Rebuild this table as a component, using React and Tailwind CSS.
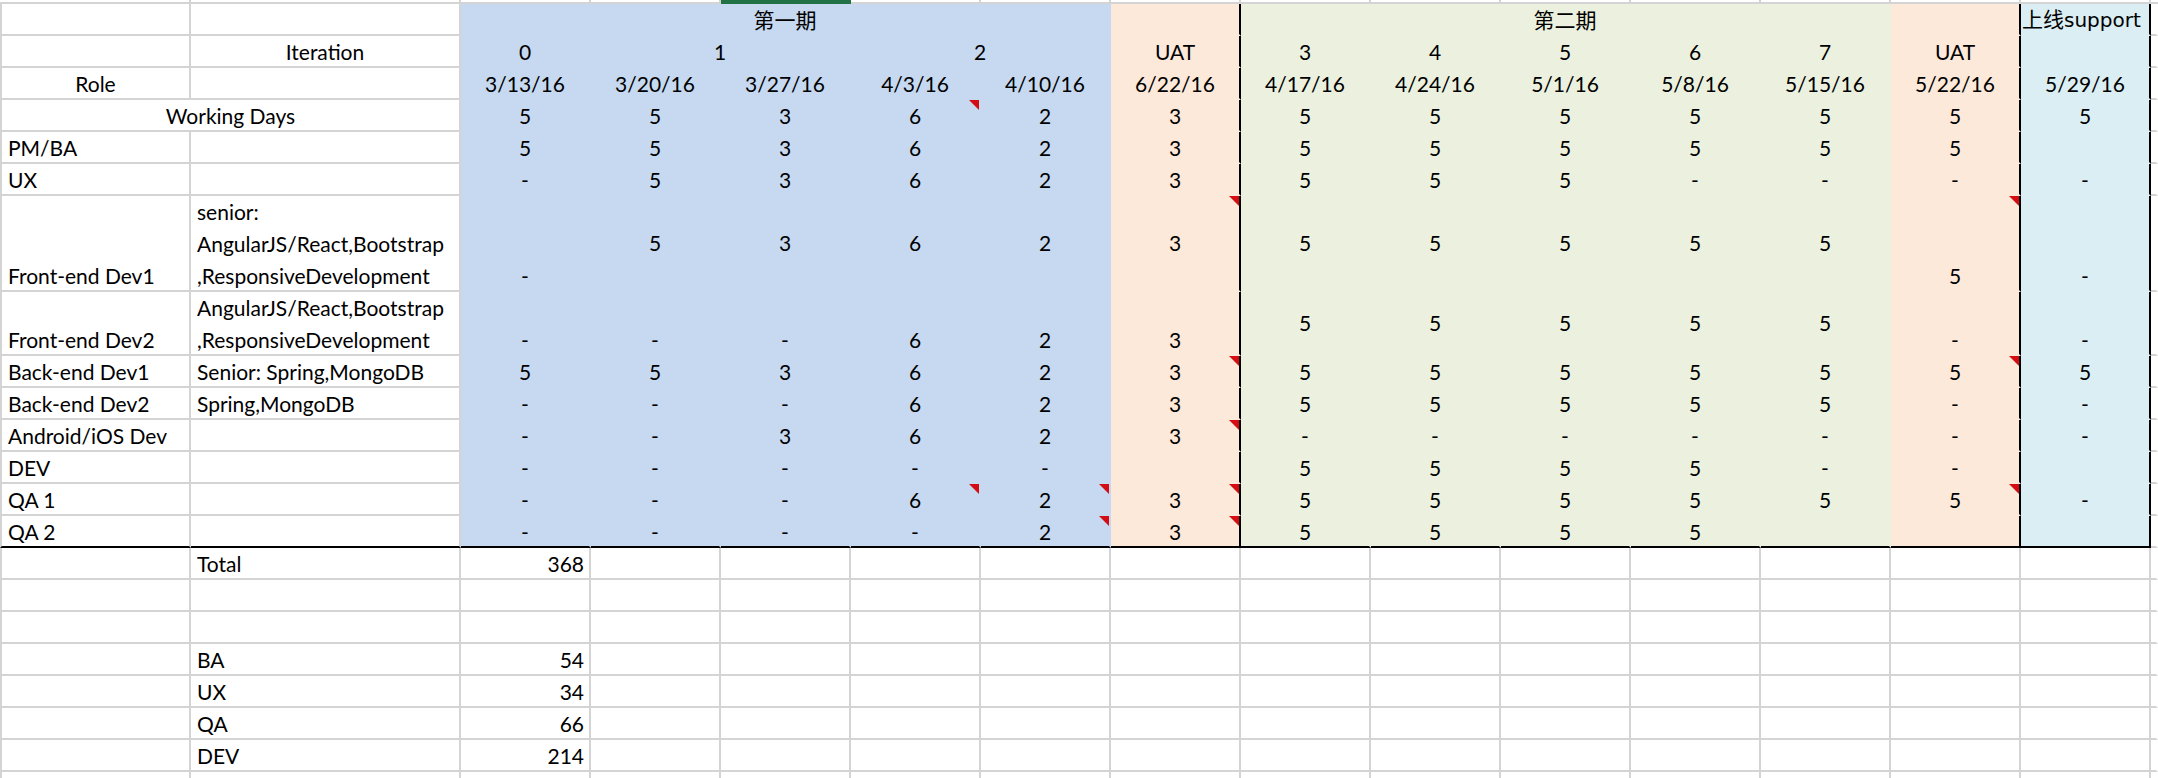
import React from 'react';
import clsx from 'clsx';

const BLUE = 'bg-[#c6d9f1]';
const PEACH = 'bg-[#fde9d9]';
const GREEN = 'bg-[#ebf1de]';
const AQUA = 'bg-[#daeef3]';

const fills = [BLUE, BLUE, BLUE, BLUE, BLUE, PEACH, GREEN, GREEN, GREEN, GREEN, GREEN, PEACH, AQUA];
const thickRight = [5, 11, 12];

const dates = ['3/13/16', '3/20/16', '3/27/16', '4/3/16', '4/10/16', '6/22/16', '4/17/16', '4/24/16', '5/1/16', '5/8/16', '5/15/16', '5/22/16', '5/29/16'];
const workingDays = ['5', '5', '3', '6', '2', '3', '5', '5', '5', '5', '5', '5', '5'];

const roles = [
  { role: 'PM/BA', vals: ['5', '5', '3', '6', '2', '3', '5', '5', '5', '5', '5', '5', ''] },
  { role: 'UX', vals: ['-', '5', '3', '6', '2', '3', '5', '5', '5', '-', '-', '-', '-'] },
  {
    role: 'Front-end Dev1',
    skills: ['senior:', 'AngularJS/React,Bootstrap', ',ResponsiveDevelopment'],
    h: 'h-[96px]',
    vals: ['-', '5', '3', '6', '2', '3', '5', '5', '5', '5', '5', '5', '-'],
    mid: [1, 2, 3, 4, 5, 6, 7, 8, 9, 10],
    notes: [5, 11],
  },
  {
    role: 'Front-end Dev2',
    skills: ['AngularJS/React,Bootstrap', ',ResponsiveDevelopment'],
    h: 'h-[64px]',
    vals: ['-', '-', '-', '6', '2', '3', '5', '5', '5', '5', '5', '-', '-'],
    mid: [6, 7, 8, 9, 10],
  },
  { role: 'Back-end Dev1', skills: ['Senior: Spring,MongoDB'], vals: ['5', '5', '3', '6', '2', '3', '5', '5', '5', '5', '5', '5', '5'], notes: [5, 11] },
  { role: 'Back-end Dev2', skills: ['Spring,MongoDB'], vals: ['-', '-', '-', '6', '2', '3', '5', '5', '5', '5', '5', '-', '-'] },
  { role: 'Android/iOS Dev', vals: ['-', '-', '3', '6', '2', '3', '-', '-', '-', '-', '-', '-', '-'], notes: [5] },
  { role: 'DEV', vals: ['-', '-', '-', '-', '-', '', '5', '5', '5', '5', '-', '-', ''] },
  { role: 'QA 1', vals: ['-', '-', '-', '6', '2', '3', '5', '5', '5', '5', '5', '5', '-'], notes: [3, 4, 5, 11] },
  { role: 'QA 2', vals: ['-', '-', '-', '-', '2', '3', '5', '5', '5', '5', '', '', ''], notes: [4, 5] },
];

const summary = [
  { label: 'Total', n: '368' },
  {},
  {},
  { label: 'BA', n: '54' },
  { label: 'UX', n: '34' },
  { label: 'QA', n: '66' },
  { label: 'DEV', n: '214' },
  {},
];

function Note() {
  return (
    <svg className="absolute top-0 right-0" width="10" height="10" viewBox="0 0 10 10">
      <polygon points="0,0 10,0 10,10" fill="#d40d12" />
    </svg>
  );
}

function Cell({ w = 'w-[130px]', fill = 'bg-white', right = 'grid', bottom = 'grid', left = false, align = 'center', mid = false, note = false, className, children }) {
  return (
    <div
      className={clsx(
        'relative flex shrink-0 border-r-2 border-b-2',
        w,
        fill,
        left && 'border-l-2 border-l-[#d4d4d4]',
        right === 'grid' && 'border-r-[#d4d4d4]',
        right === 'none' && 'border-r-transparent',
        right === 'black' && 'border-r-black',
        bottom === 'grid' && 'border-b-[#d4d4d4]',
        bottom === 'none' && 'border-b-transparent',
        bottom === 'black' && 'border-b-black',
        mid ? 'items-center' : 'items-end',
        align === 'left' && 'justify-start pl-[6px]',
        align === 'center' && 'justify-center',
        align === 'right' && 'justify-end pr-[5px]',
        className
      )}
    >
      {children != null && children !== '' && (
        <div className={clsx('leading-[32px] whitespace-nowrap', !mid && '-mb-[2px]')}>{children}</div>
      )}
      {note && <Note />}
    </div>
  );
}

const Tail = ({ bottom = 'grid' }) => <Cell w="flex-1 min-w-0" right="none" bottom={bottom} />;

function HeaderStrip() {
  const cols = Array.from({ length: 13 }, (_, i) => i);
  return (
    <div className="flex h-[4px]">
      <div className="w-[191px] shrink-0 border-r-2 border-b-2 border-[#d4d4d4]" />
      <div className="w-[270px] shrink-0 border-r-2 border-b-2 border-[#d4d4d4]" />
      {cols.map((i) => (
        <div key={i} className={clsx('w-[130px] shrink-0', i === 2 ? 'bg-[#217346]' : 'border-r-2 border-b-2 border-[#d4d4d4]')} />
      ))}
      <div className="flex-1 border-b-2 border-[#d4d4d4]" />
    </div>
  );
}

export default function App() {
  return (
    <div className="h-[778px] w-full overflow-hidden bg-white text-black text-[21px] font-[family-name:Lato,'Noto_Sans_CJK_SC',sans-serif]">
      <HeaderStrip />

      {/* phase row */}
      <div className="flex h-[32px]">
        <Cell w="w-[191px]" left />
        <Cell w="w-[270px]" />
        <Cell w="w-[650px]" fill={BLUE} right="none" bottom="none">第一期</Cell>
        <Cell fill={PEACH} right="black" bottom="none" />
        <Cell w="w-[650px]" fill={GREEN} right="none" bottom="none">第二期</Cell>
        <Cell fill={PEACH} right="black" bottom="none" />
        <Cell fill={AQUA} right="black" bottom="none" align="left" className="!pl-[1px]">
          上线<span className="font-[family-name:'DejaVu_Sans',sans-serif] text-[20px]">support</span>
        </Cell>
        <Tail />
      </div>

      {/* iteration row */}
      <div className="flex h-[32px]">
        <Cell w="w-[191px]" left />
        <Cell w="w-[270px]">Iteration</Cell>
        <Cell fill={BLUE} right="none" bottom="none">0</Cell>
        <Cell w="w-[260px]" fill={BLUE} right="none" bottom="none">1</Cell>
        <Cell w="w-[260px]" fill={BLUE} right="none" bottom="none">2</Cell>
        <Cell fill={PEACH} right="black" bottom="none">UAT</Cell>
        {['3', '4', '5', '6', '7'].map((n) => (
          <Cell key={n} fill={GREEN} right="none" bottom="none">{n}</Cell>
        ))}
        <Cell fill={PEACH} right="black" bottom="none">UAT</Cell>
        <Cell fill={AQUA} right="black" bottom="none" />
        <Tail />
      </div>

      {/* dates row */}
      <div className="flex h-[32px]">
        <Cell w="w-[191px]" left>Role</Cell>
        <Cell w="w-[270px]" />
        {dates.map((d, i) => (
          <Cell key={d} fill={fills[i]} right={thickRight.includes(i) ? 'black' : 'none'} bottom="none">{d}</Cell>
        ))}
        <Tail />
      </div>

      {/* working days */}
      <div className="flex h-[32px]">
        <Cell w="w-[461px]" left>Working Days</Cell>
        {workingDays.map((d, i) => (
          <Cell key={i} fill={fills[i]} right={thickRight.includes(i) ? 'black' : 'none'} bottom="none" note={i === 3}>{d}</Cell>
        ))}
        <Tail />
      </div>

      {roles.map((r, ri) => {
        const last = ri === roles.length - 1;
        return (
          <div key={r.role} className={clsx('flex', r.h || 'h-[32px]')}>
            <Cell w="w-[191px]" left align="left" bottom={last ? 'black' : 'grid'}>{r.role}</Cell>
            <Cell w="w-[270px]" align="left" bottom={last ? 'black' : 'grid'}>
              {r.skills && r.skills.map((s) => <div key={s}>{s}</div>)}
            </Cell>
            {r.vals.map((v, i) => (
              <Cell
                key={i}
                fill={fills[i]}
                right={thickRight.includes(i) ? 'black' : 'none'}
                bottom={last ? 'black' : 'none'}
                mid={r.mid ? r.mid.includes(i) : false}
                note={r.notes ? r.notes.includes(i) : false}
              >
                {v}
              </Cell>
            ))}
            <Tail />
          </div>
        );
      })}

      {summary.map((s, si) => (
        <div key={si} className="flex h-[32px]">
          <Cell w="w-[191px]" left />
          <Cell w="w-[270px]" align="left">{s.label}</Cell>
          <Cell align="right">{s.n}</Cell>
          {Array.from({ length: 12 }, (_, i) => (
            <Cell key={i} />
          ))}
          <Tail />
        </div>
      ))}
    </div>
  );
}
